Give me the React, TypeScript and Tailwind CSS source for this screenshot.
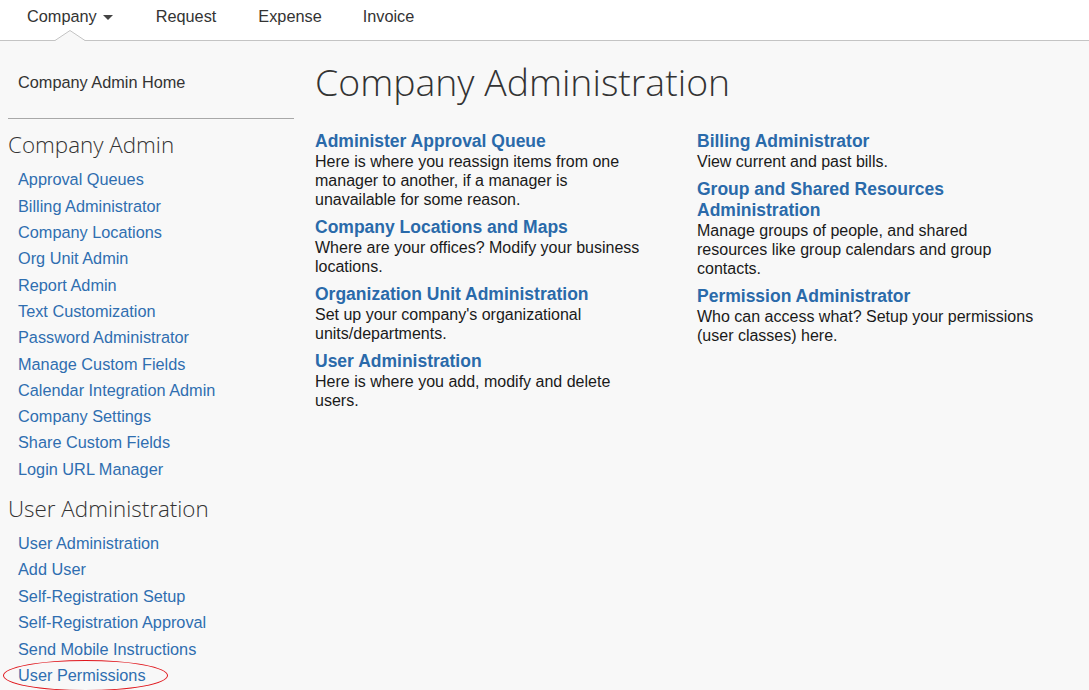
import React from "react";

const companyLinks = [
  "Approval Queues",
  "Billing Administrator",
  "Company Locations",
  "Org Unit Admin",
  "Report Admin",
  "Text Customization",
  "Password Administrator",
  "Manage Custom Fields",
  "Calendar Integration Admin",
  "Company Settings",
  "Share Custom Fields",
  "Login URL Manager",
];

const userLinks = [
  "User Administration",
  "Add User",
  "Self-Registration Setup",
  "Self-Registration Approval",
  "Send Mobile Instructions",
  "User Permissions",
];

type Item = { title: string[]; text: string[] };

const leftCol: Item[] = [
  {
    title: ["Administer Approval Queue"],
    text: [
      "Here is where you reassign items from one",
      "manager to another, if a manager is",
      "unavailable for some reason.",
    ],
  },
  {
    title: ["Company Locations and Maps"],
    text: ["Where are your offices? Modify your business", "locations."],
  },
  {
    title: ["Organization Unit Administration"],
    text: ["Set up your company's organizational", "units/departments."],
  },
  {
    title: ["User Administration"],
    text: ["Here is where you add, modify and delete", "users."],
  },
];

const rightCol: Item[] = [
  { title: ["Billing Administrator"], text: ["View current and past bills."] },
  {
    title: ["Group and Shared Resources", "Administration"],
    text: [
      "Manage groups of people, and shared",
      "resources like group calendars and group",
      "contacts.",
    ],
  },
  {
    title: ["Permission Administrator"],
    text: ["Who can access what? Setup your permissions", "(user classes) here."],
  },
];

const Card = ({ title, text }: Item) => (
  <div className="mb-[8px]">
    <a className="block text-[17.5px] leading-[21px] font-bold text-[#2a6aaa] cursor-pointer">
      {title.map((t) => (
        <span key={t} className="block whitespace-nowrap">{t}</span>
      ))}
    </a>
    <p className="text-[16px] leading-[19px] text-[#1a1a1a]">
      {text.map((t) => (
        <span key={t} className="block whitespace-nowrap">{t}</span>
      ))}
    </p>
  </div>
);

const App: React.FC = () => {
  return (
    <div className="w-[1089px] h-[690px] overflow-hidden bg-[#f8f8f8] font-['Liberation_Sans',Arial,sans-serif]">
      {/* top nav */}
      <div className="relative h-[41px] bg-white border-b border-[#c4c4c4]">
        <ul className="flex items-center h-[33px] text-[16.3px] text-[#333]">
          <li className="ml-[27px] flex items-center cursor-pointer">
            Company
            <span className="ml-[6px] mt-[2px] w-0 h-0 border-l-[5px] border-r-[5px] border-t-[5px] border-l-transparent border-r-transparent border-t-[#444]" />
          </li>
          <li className="ml-[43px] cursor-pointer">Request</li>
          <li className="ml-[42px] cursor-pointer">Expense</li>
          <li className="ml-[41px] cursor-pointer">Invoice</li>
        </ul>
        {/* notch under active tab */}
        <svg className="absolute left-[55px] top-[30px]" width="30" height="12" viewBox="0 0 30 12">
          <path d="M0 10.5 L15 0.5 L30 10.5 L30 12 L0 12 Z" fill="#f8f8f8" />
          <path d="M0 10.5 L15 0.5 L30 10.5" fill="none" stroke="#c4c4c4" strokeWidth="1" />
        </svg>
      </div>

      <div className="flex">
        {/* side nav */}
        <div className="w-[294px] shrink-0 pl-[8px]">
          <div className="pl-[10px] pt-[29px] pb-[24px] text-[16.3px] text-[#333]">Company Admin Home</div>
          <div className="border-t border-[#a8a8a8]" />
          <h3 className="mt-[12px] mb-[7px] text-[22.4px] leading-[28px] font-light text-[#333] font-['Open_Sans',sans-serif]">
            Company Admin
          </h3>
          <ul className="pl-[10px] text-[16.3px] leading-[26.3px] text-[#2f6eb0]">
            {companyLinks.map((l) => (
              <li key={l} className="cursor-pointer">{l}</li>
            ))}
          </ul>
          <h3 className="mt-[13px] mb-[7px] text-[22.4px] leading-[28px] font-light text-[#333] font-['Open_Sans',sans-serif]">
            User Administration
          </h3>
          <ul className="pl-[10px] text-[16.3px] leading-[26.4px] text-[#2f6eb0]">
            {userLinks.map((l) => (
              <li key={l} className="relative cursor-pointer">
                {l}
                {l === "User Permissions" && (
                  <span className="absolute left-[-15px] top-[-2px] w-[165px] h-[31px] rounded-[50%] border-[1.5px] border-[#e0151b]" />
                )}
              </li>
            ))}
          </ul>
        </div>

        {/* main */}
        <div className="flex-1 pl-[21px]">
          <h1 className="mt-[18px] mb-[26px] text-[37.4px] leading-[46px] font-light text-[#333] font-['Open_Sans',sans-serif]">
            Company Administration
          </h1>
          <div className="flex">
            <div className="w-[382px] shrink-0">
              {leftCol.map((c) => (
                <Card key={c.title[0]} {...c} />
              ))}
            </div>
            <div className="w-[360px]">
              {rightCol.map((c) => (
                <Card key={c.title[0]} {...c} />
              ))}
            </div>
          </div>
        </div>
      </div>
    </div>
  );
};

export default App;
